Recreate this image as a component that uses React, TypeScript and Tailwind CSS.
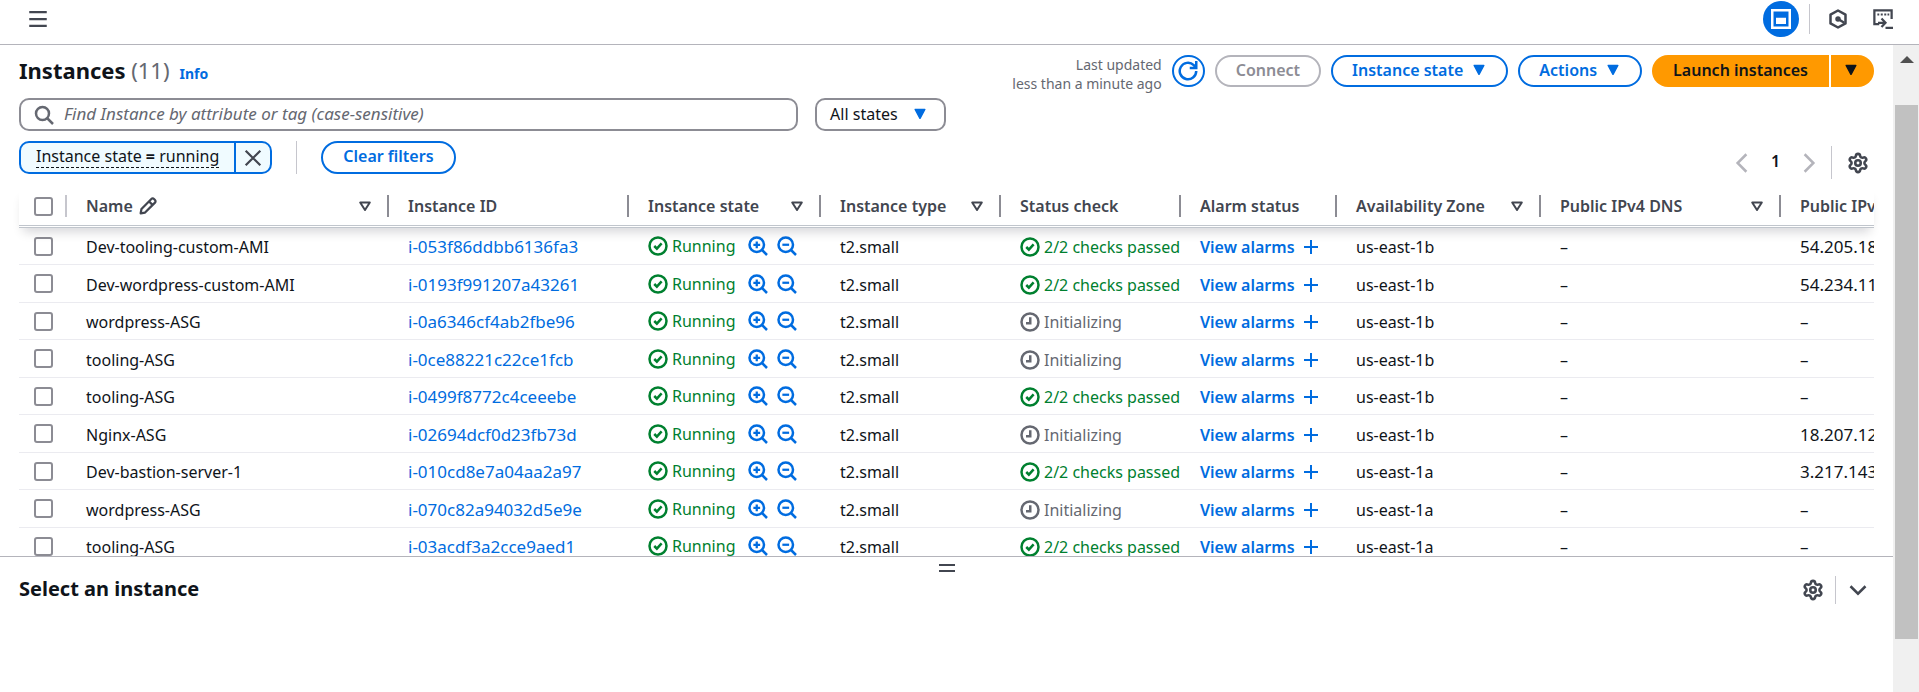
import React from "react";
import { Settings } from "lucide-react";

type Check = "ok" | "init";

const rows: { name: string; id: string; check: Check; az: string; ip: string }[] = [
  { name: "Dev-tooling-custom-AMI", id: "i-053f86ddbb6136fa3", check: "ok", az: "us-east-1b", ip: "54.205.18" },
  { name: "Dev-wordpress-custom-AMI", id: "i-0193f991207a43261", check: "ok", az: "us-east-1b", ip: "54.234.11" },
  { name: "wordpress-ASG", id: "i-0a6346cf4ab2fbe96", check: "init", az: "us-east-1b", ip: "–" },
  { name: "tooling-ASG", id: "i-0ce88221c22ce1fcb", check: "init", az: "us-east-1b", ip: "–" },
  { name: "tooling-ASG", id: "i-0499f8772c4ceeebe", check: "ok", az: "us-east-1b", ip: "–" },
  { name: "Nginx-ASG", id: "i-02694dcf0d23fb73d", check: "init", az: "us-east-1b", ip: "18.207.12" },
  { name: "Dev-bastion-server-1", id: "i-010cd8e7a04aa2a97", check: "ok", az: "us-east-1a", ip: "3.217.143" },
  { name: "wordpress-ASG", id: "i-070c82a94032d5e9e", check: "init", az: "us-east-1a", ip: "–" },
  { name: "tooling-ASG", id: "i-03acdf3a2cce9aed1", check: "ok", az: "us-east-1a", ip: "–" },
];

const columns: { label: string; sort?: boolean; edit?: boolean; last?: boolean }[] = [
  { label: "Name", sort: true, edit: true },
  { label: "Instance ID" },
  { label: "Instance state", sort: true },
  { label: "Instance type", sort: true },
  { label: "Status check" },
  { label: "Alarm status" },
  { label: "Availability Zone", sort: true },
  { label: "Public IPv4 DNS", sort: true },
  { label: "Public IPv4", last: true },
];

function Icon({ children, className = "size-5" }: { children: React.ReactNode; className?: string }) {
  return (
    <svg
      viewBox="0 0 16 16"
      fill="none"
      stroke="currentColor"
      strokeWidth="2"
      aria-hidden="true"
      className={`shrink-0 ${className}`}
    >
      {children}
    </svg>
  );
}

function CaretDown() {
  return (
    <Icon className="size-4">
      <path d="M3.2 3.5h9.6L8 12.3z" fill="currentColor" strokeLinejoin="round" strokeWidth="1.5" />
    </Icon>
  );
}

function SortCaret() {
  return (
    <Icon className="size-4">
      <path d="M3.2 4.5h9.6L8 12z" strokeLinejoin="round" />
    </Icon>
  );
}

function CheckCircle() {
  return (
    <Icon>
      <circle cx="8" cy="8" r="6.8" />
      <path d="m5 8 2.1 2.1 3.8-4.2" />
    </Icon>
  );
}

function Pending() {
  return (
    <Icon>
      <circle cx="8" cy="8" r="6.8" />
      <path d="M8.2 4.2V9H4.8" />
    </Icon>
  );
}

function Magnifier({ plus }: { plus: boolean }) {
  return (
    <Icon>
      <circle cx="7" cy="7" r="5.8" />
      <path d="m11 11 4.2 4.2" />
      <path d={plus ? "M4.3 7h5.4M7 4.3v5.4" : "M4.3 7h5.4"} strokeWidth="1.8" />
    </Icon>
  );
}

function CheckBox({ label }: { label: string }) {
  return (
    <input
      type="checkbox"
      aria-label={label}
      className="block size-[19px] appearance-none rounded-[3px] border-2 border-[#8c8c94] bg-white"
    />
  );
}

const pill =
  "flex h-8 shrink-0 items-center gap-2 whitespace-nowrap rounded-full border-2 border-[#006ce0] px-[19px] pb-0.5 font-semibold text-[#006ce0]";

function TopBar() {
  return (
    <header className="flex h-[45px] shrink-0 justify-between border-b border-[#b4b4bb] pl-7 pr-[26px]">
      <button aria-label="Open navigation" className="flex h-[38px] items-center text-[#424650]">
        <Icon>
          <path d="M1 2.5h14M1 8h14M1 13.5h14" strokeWidth="1.8" />
        </Icon>
      </button>
      <div className="flex h-[38px] items-center text-[#424650]">
        <button
          aria-label="Split view"
          className="mr-2.5 flex size-9 items-center justify-center rounded-full bg-[#006ce0] text-white"
        >
          <Icon>
            <path d="M1 1h14v14H1z" />
            <path d="M4 7h8v5H4z" fill="currentColor" stroke="none" />
          </Icon>
        </button>
        <span className="h-[30px] w-px bg-[#c6c6cd]" />
        <button aria-label="Diagnostics" className="ml-[18px]">
          <Icon>
            <path d="M8 1.2 14 4.5v7L8 14.8 2 11.5v-7z" strokeLinejoin="round" />
            <path d="m8 8 5 3" />
            <circle cx="8" cy="8" r="2.2" fill="currentColor" stroke="none" />
          </Icon>
        </button>
        <button aria-label="CloudShell" className="ml-[25px]">
          <Icon>
            <path d="M5 12H1.1V1.1h13.8V8M10 15h6" strokeWidth="1.8" />
            <path d="M3.5 4.4H5M6.2 4.4h1.6M9 4.4h1.6M11.6 4.4H13" strokeWidth="1.6" />
            <path d="M4 11h6M6.8 7.6 10 11l-3.2 3.4" strokeWidth="1.8" />
          </Icon>
        </button>
      </div>
    </header>
  );
}

function Toolbar() {
  return (
    <>
      <div className="flex items-start justify-between pt-[10px]">
        <div className="flex items-baseline">
          <h1 className="text-[22px] leading-[30px] font-bold text-[#0f141a]">
            Instances <span className="font-normal text-[#656871]">(11)</span>
          </h1>
          <a href="#info" className="ml-2.5 text-sm font-bold text-[#006ce0]">
            Info
          </a>
        </div>
        <div className="flex items-start gap-2.5">
          <p className="text-right text-sm leading-[19px] text-[#656871]">
            Last updated
            <br />
            less than a minute ago
          </p>
          <button
            aria-label="Refresh"
            className="flex h-8 w-[33px] items-center justify-center rounded-full border-2 border-[#006ce0] text-[#006ce0]"
          >
            <Icon>
              <path d="M14.6 8a6.6 6.6 0 1 1-2-4.7L14 5" />
              <path d="M14.6 0v5.6H9.4" />
            </Icon>
          </button>
          <button
            disabled
            className="flex h-8 items-center rounded-full border-2 border-[#b4b4bb] px-[19px] pb-0.5 font-semibold text-[#8c8c94]"
          >
            Connect
          </button>
          <button className={pill}>
            Instance state <CaretDown />
          </button>
          <button className={pill}>
            Actions <CaretDown />
          </button>
          <div className="flex gap-0.5 text-[#0f141a]">
            <button className="h-8 rounded-l-full bg-[#ff9900] px-[21px] pb-0.5 font-semibold whitespace-nowrap">
              Launch instances
            </button>
            <button
              aria-label="More launch options"
              className="flex h-8 w-[43px] items-center rounded-r-full bg-[#ff9900] pb-0.5 pl-3"
            >
              <CaretDown />
            </button>
          </div>
        </div>
      </div>

      <div className="mt-[5px] flex gap-[17px]">
        <label className="flex h-[33px] w-[42%] items-center gap-2.5 rounded-[10px] border-2 border-[#8c8c94] pl-[13px] text-[#656871]">
          <Icon>
            <circle cx="6.8" cy="6.8" r="5.2" />
            <path d="m10.6 10.6 4.6 4.6" />
          </Icon>
          <input
            type="text"
            aria-label="Find instance"
            placeholder="Find Instance by attribute or tag (case-sensitive)"
            className="min-w-0 flex-1 bg-transparent pb-0.5 text-[17px] outline-none placeholder:text-[#656871] placeholder:italic"
          />
        </label>
        <button className="flex h-[33px] w-[131px] items-center justify-between rounded-[10px] border-2 border-[#8c8c94] pr-4 pb-px pl-[13px] whitespace-nowrap">
          All states
          <span className="text-[#006ce0]">
            <CaretDown />
          </span>
        </button>
      </div>

      <div className="mt-2.5 flex justify-between">
        <div className="flex">
          <div className="flex h-[33px] rounded-[10px] border-2 border-[#006ce0] bg-[#f0fbff]">
            <button className="flex items-center px-[15px] pb-0.5 whitespace-nowrap">
              <span className="border-b border-dashed border-[#0f141a] leading-[22px]">
                Instance state <b>=</b> running
              </span>
            </button>
            <button
              aria-label="Remove filter"
              className="flex w-9 items-center justify-center border-l-2 border-[#006ce0] text-[#424650]"
            >
              <Icon className="size-[18px]">
                <path d="m1.5 1.5 13 13M14.5 1.5l-13 13" />
              </Icon>
            </button>
          </div>
          <span className="mr-6 ml-6 h-[33px] w-px bg-[#c6c6cd]" />
          <button className="h-[33px] rounded-full border-2 border-[#006ce0] px-5 pb-[3px] font-semibold whitespace-nowrap text-[#006ce0]">
            Clear filters
          </button>
        </div>
        <nav aria-label="Pagination" className="mt-[5px] flex h-[33px] items-center text-[#b4b4bb]">
          <button aria-label="Previous page" disabled>
            <Icon>
              <path d="M11.5 1 4.5 8l7 7" />
            </Icon>
          </button>
          <button className="w-[47px] pb-1 text-center font-semibold text-[#0f141a]">1</button>
          <button aria-label="Next page" disabled>
            <Icon>
              <path d="m4.5 1 7 7-7 7" />
            </Icon>
          </button>
          <span className="ml-3 h-[33px] w-px bg-[#c6c6cd]" />
          <button aria-label="Preferences" className="mr-[5px] ml-[15px] text-[#424650]">
            <Settings className="size-[22px]" strokeWidth={2.8} />
          </button>
        </nav>
      </div>
    </>
  );
}

function InstanceTable() {
  return (
    <table className="mt-2 w-full table-fixed border-separate border-spacing-0 text-left">
      <colgroup>
        <col className="w-12" />
        <col className="w-[322px]" />
        <col className="w-60" />
        <col className="w-48" />
        <col className="w-[180px]" />
        <col className="w-[180px]" />
        <col className="w-[156px]" />
        <col className="w-[204px]" />
        <col className="w-60" />
        <col />
      </colgroup>
      <thead className="relative bg-white text-[#424650] shadow-[0_8px_10px_-4px_rgba(0,7,22,0.16)]">
        <tr className="h-[41px]">
          <th className="border-b-3 border-double border-[#c0c5cc] p-0">
            <div className="flex h-[22px] items-center border-r-2 border-solid border-[#c6c6cd] pl-[15px]">
              <CheckBox label="Select all instances" />
            </div>
          </th>
          {columns.map((c) => (
            <th
              key={c.label}
              className="overflow-hidden border-b-3 border-double border-[#c0c5cc] p-0 font-semibold whitespace-nowrap"
            >
              <div
                className={`flex h-[22px] items-center pr-[14px] pl-[19px] ${c.last ? "" : "border-r-2 border-solid border-[#8c8c94]"}`}
              >
                <span className="leading-[22px]">{c.label}</span>
                {c.edit && (
                  <Icon className="ml-1.5 size-[18px]">
                    <path
                      d="M1.5 14.5 2.2 10.6 11 1.8a1.6 1.6 0 0 1 2.3 0l.9.9a1.6 1.6 0 0 1 0 2.3L5.4 13.8zM9 4l3 3"
                      strokeLinejoin="round"
                    />
                  </Icon>
                )}
                {c.sort && (
                  <span className="ml-auto">
                    <SortCaret />
                  </span>
                )}
              </div>
            </th>
          ))}
        </tr>
      </thead>
      <tbody className="[&_td]:overflow-hidden [&_td]:border-b [&_td]:border-[#ebebf0] [&_td]:p-0 [&_td]:whitespace-nowrap [&_td:not(:first-child)]:pl-[19px] [&_td:not(:first-child):not(:nth-child(4))]:pt-0.5">
        {rows.map((r) => (
          <tr key={r.id} className="odd:h-[37px] even:h-[38px]">
            <td>
              <div className="pl-[15px]">
                <CheckBox label={`Select ${r.name} ${r.id}`} />
              </div>
            </td>
            <td>{r.name}</td>
            <td>
              <a href={`#${r.id}`} className="text-[17px] text-[#006ce0]">
                {r.id}
              </a>
            </td>
            <td>
              <div className="flex items-center text-[#00802f]">
                <CheckCircle />
                <span className="ml-1">Running</span>
                <span className="ml-auto flex gap-[9px] pr-6 text-[#006ce0]">
                  <button aria-label="Filter for Running">
                    <Magnifier plus />
                  </button>
                  <button aria-label="Filter out Running">
                    <Magnifier plus={false} />
                  </button>
                </span>
              </div>
            </td>
            <td>t2.small</td>
            <td>
              {r.check === "ok" ? (
                <div className="flex items-center gap-1 text-[#00802f]">
                  <CheckCircle /> 2/2 checks passed
                </div>
              ) : (
                <div className="flex items-center gap-1 text-[#656871]">
                  <Pending /> Initializing
                </div>
              )}
            </td>
            <td>
              <button className="flex items-center gap-2 font-semibold text-[#006ce0]">
                View alarms
                <Icon className="size-4">
                  <path d="M8 1v14M1 8h14" />
                </Icon>
              </button>
            </td>
            <td>{r.az}</td>
            <td>–</td>
            <td className="text-[17px]">{r.ip}</td>
          </tr>
        ))}
      </tbody>
    </table>
  );
}

function SplitPanel() {
  return (
    <section className="h-[136px] shrink-0 border-t border-[#b4b4bb] bg-white">
      <div className="flex h-[19px] items-end justify-center">
        <button aria-label="Resize panel" className="text-[#424650]">
          <Icon className="size-4">
            <path d="M0 5h16M0 11h16" />
          </Icon>
        </button>
      </div>
      <div className="flex items-center justify-between pr-[25px] pl-[19px]">
        <h2 className="pb-0.5 text-xl leading-6 font-bold">Select an instance</h2>
        <div className="flex items-center text-[#424650]">
          <button aria-label="Panel preferences">
            <Settings className="size-[22px]" strokeWidth={2.8} />
          </button>
          <span className="mr-3 ml-[11px] h-7 w-px bg-[#c6c6cd]" />
          <button aria-label="Collapse panel">
            <Icon>
              <path d="m2 5 6 6 6-6" />
            </Icon>
          </button>
        </div>
      </div>
    </section>
  );
}

function ScrollTrack() {
  return (
    <div aria-hidden="true" className="flex w-[26px] shrink-0 flex-col bg-[#f0f0f0] pr-px pl-0.5">
      <div className="flex h-[60px] justify-center pt-[11px] text-[#505050]">
        <svg viewBox="0 0 14 7" className="h-[7px] w-3.5">
          <path d="M7 0l7 7H0z" fill="currentColor" />
        </svg>
      </div>
      <div className="grow-[10] bg-[#c1c1c1]" />
      <div className="grow" />
    </div>
  );
}

export default function App() {
  return (
    <div className="flex h-screen flex-col overflow-hidden bg-white font-['Noto_Sans','Open_Sans',sans-serif] text-base leading-[22px] text-[#0f141a]">
      <TopBar />
      <div className="flex min-h-0 flex-1">
        <div className="flex min-w-0 flex-1 flex-col">
          <main className="min-h-0 flex-1 overflow-hidden px-[19px]">
            <Toolbar />
            <InstanceTable />
          </main>
          <SplitPanel />
        </div>
        <ScrollTrack />
      </div>
    </div>
  );
}
